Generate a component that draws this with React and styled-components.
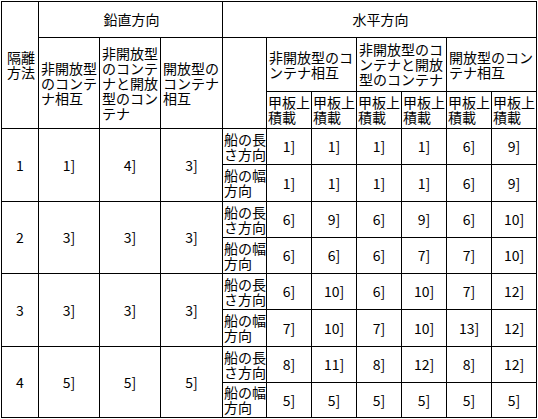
import React from 'react'
import styled, { createGlobalStyle } from 'styled-components'

const GlobalStyle = createGlobalStyle`
  html, body {
    margin: 0;
    padding: 0;
    background: #fff;
  }
`

const Page = styled.div`
  padding: 1px 0 0 1px;
`

const Table = styled.table`
  border-collapse: collapse;
  table-layout: fixed;
  width: 536px;
  font-family: "Noto Sans CJK JP", "Noto Sans", sans-serif;
  font-size: 14px;
  line-height: 15px;
  color: #000;
`

const Cell = styled.td`
  border: 1px solid #000;
  padding: 0 0 0 2px;
  vertical-align: middle;
  text-align: ${(p) => p.align || 'left'};
  word-break: break-all;
  overflow: hidden;
`

const SideCell = styled(Cell)`
  padding: 0 0 0 1px;
`

const Num = styled(Cell)`
  text-align: center;
  padding: 0;
`

const Row = styled.tr`
  height: ${(p) => p.h}px;
`

const widths = [37, 61, 61, 62, 44, 45, 45, 45, 45, 45, 45]

const groups = [
  { id: 1, vertical: ['1]', '4]', '3]'], length: ['1]', '1]', '1]', '1]', '6]', '9]'], breadth: ['1]', '1]', '1]', '1]', '6]', '9]'] },
  { id: 2, vertical: ['3]', '3]', '3]'], length: ['6]', '9]', '6]', '9]', '6]', '10]'], breadth: ['6]', '6]', '6]', '7]', '7]', '10]'] },
  { id: 3, vertical: ['3]', '3]', '3]'], length: ['6]', '10]', '6]', '10]', '7]', '12]'], breadth: ['7]', '10]', '7]', '10]', '13]', '12]'] },
  { id: 4, vertical: ['5]', '5]', '5]'], length: ['8]', '11]', '8]', '12]', '8]', '12]'], breadth: ['5]', '5]', '5]', '5]', '5]', '5]'] },
]

const kinds = ['非開放型のコンテナ相互', '非開放型のコンテナと開放型のコンテナ', '開放型のコンテナ相互']
const rowHeights = [[36, 37], [36, 36], [36, 37], [36, 35]]

export default function App() {
  return (
    <Page>
      <GlobalStyle />
      <Table>
        <colgroup>
          {widths.map((w, i) => <col key={i} style={{ width: w }} />)}
        </colgroup>
        <tbody>
          <Row h={36}>
            <Cell rowSpan={3} align="center">隔離方法</Cell>
            <Cell colSpan={3} align="center">鉛直方向</Cell>
            <Cell colSpan={7} align="center">水平方向</Cell>
          </Row>
          <Row h={54}>
            {kinds.map((k) => <Cell key={'v' + k} rowSpan={2}>{k}</Cell>)}
            <Cell rowSpan={2} />
            {kinds.map((k) => <Cell key={'h' + k} colSpan={2}>{k}</Cell>)}
          </Row>
          <Row h={37}>
            {[0, 1, 2, 3, 4, 5].map((i) => <SideCell key={i}>甲板上積載</SideCell>)}
          </Row>
          {groups.map((g, gi) => (
            <React.Fragment key={g.id}>
              <Row h={rowHeights[gi][0]}>
                <Num rowSpan={2}>{g.id}</Num>
                {g.vertical.map((v, i) => <Num key={i} rowSpan={2}>{v}</Num>)}
                <SideCell>船の長さ方向</SideCell>
                {g.length.map((v, i) => <Num key={i}>{v}</Num>)}
              </Row>
              <Row h={rowHeights[gi][1]}>
                <SideCell>船の幅方向</SideCell>
                {g.breadth.map((v, i) => <Num key={i}>{v}</Num>)}
              </Row>
            </React.Fragment>
          ))}
        </tbody>
      </Table>
    </Page>
  )
}
